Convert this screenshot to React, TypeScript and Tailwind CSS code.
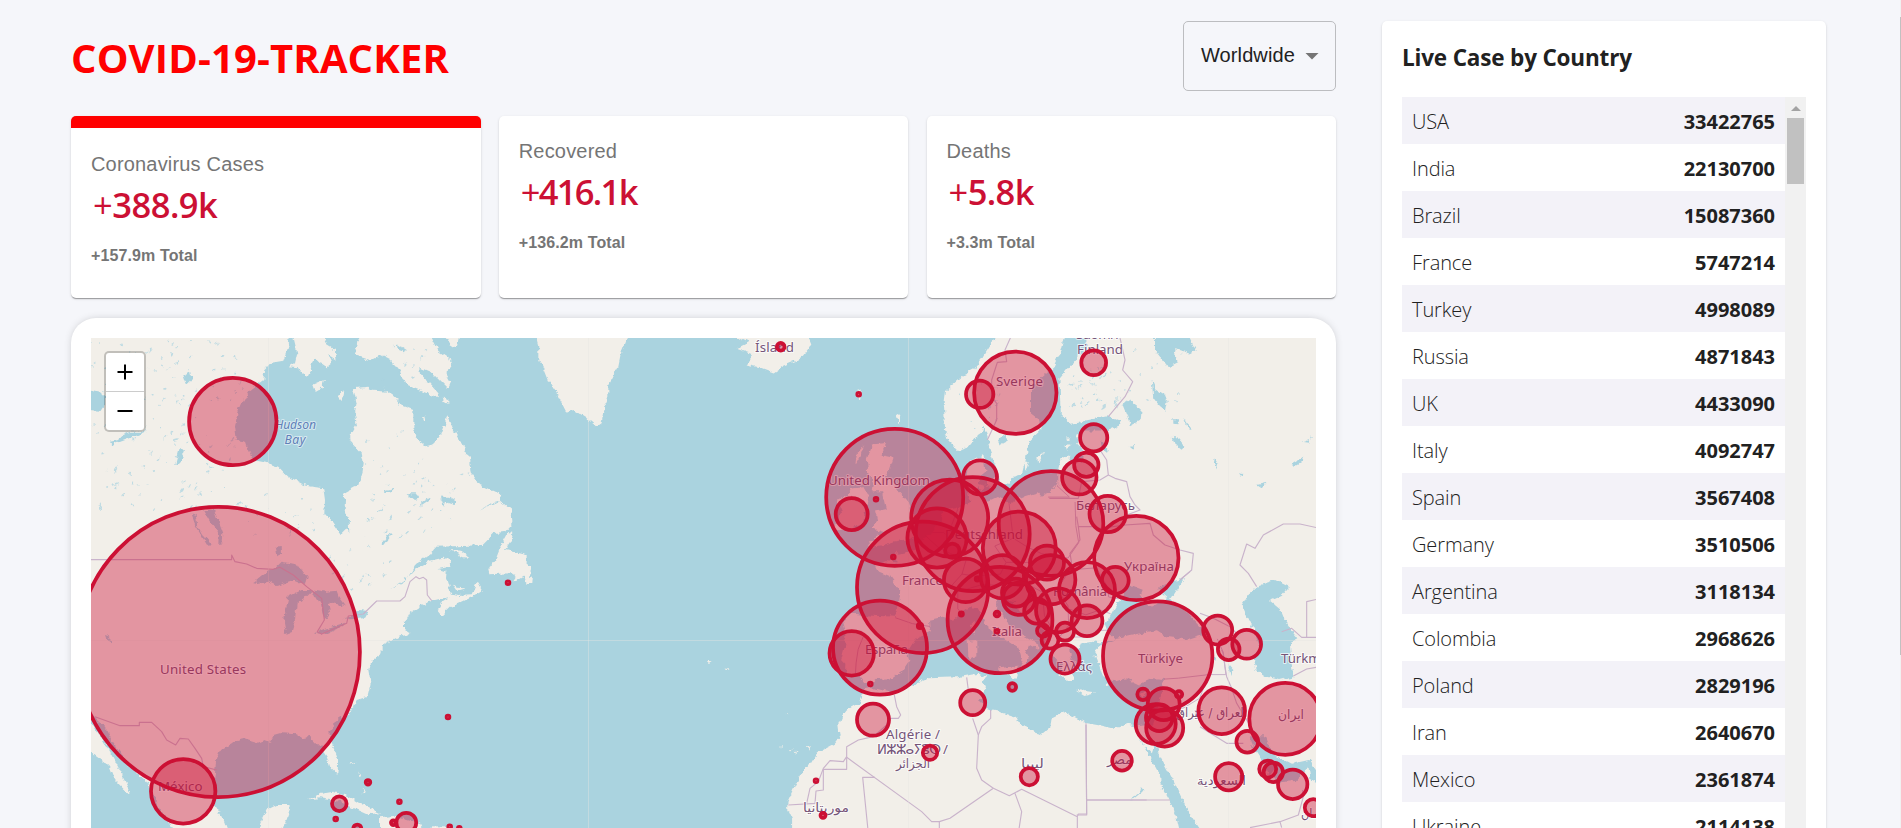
import React from "react";

const MAP = { x: 91, y: 338, w: 1225, h: 490 };
const ORIGIN_X = 908;
const EQUATOR_Y = 960;
const WORLD = 2560;

// Web Mercator projection, one world is 2560px wide at this zoom level.
const project = (lon: number, lat: number) => {
  const phi = (lat * Math.PI) / 180;
  const x = ORIGIN_X + (lon * WORLD) / 360;
  const y = EQUATOR_Y - (WORLD / (2 * Math.PI)) * Math.log(Math.tan(Math.PI / 4 + phi / 2));
  return `${x.toFixed(1)} ${y.toFixed(1)}`;
};

const geo = (s: string, close = true) =>
  "M" +
  s
    .trim()
    .split(/\s+/)
    .map((p) => {
      const [lon, lat] = p.split(",").map(Number);
      return project(lon, lat);
    })
    .join("L") +
  (close ? "Z" : "");

const EURASIA_AFRICA =
  "13,67 12.2,65.5 11,64.7 10.5,64.3 9.3,63.6 8,63.3 7,62.9 5.2,62.2 5,61.5 5.1,60.8 5.2,59.5 5.7,58.7 7,58 8.2,58.2 9.5,59 10.4,59.3 10.6,59.8 11.2,59 11.5,58 12.5,56.6 13,55.5 14.2,55.4 14.5,56 16,56.2 16.6,57.5 17,58.7 18.8,59.6 18.6,60.2 17.3,60.7 17.3,62.2 18.5,63 20.5,63.8 21.5,64.8 22,65.7 25,65.6 25.2,65 23,63.9 21.3,63 21.4,61.5 21.5,60.6 23,59.9 25,60.2 28,60.5 30,60.1 30,59.9 28,59.5 25,59.5 23.5,59.2 23.7,58.6 24.5,58.2 24.3,57.2 23.3,57.1 22.5,57.7 21.4,57.3 21,56.4 21,55.4 20,54.8 18.7,54.5 18.3,54.8 16.5,54.5 14.2,53.9 12.5,54.4 11,54 10,54.8 10,56 10.9,56.4 10.6,57.7 8.5,57.1 8.1,55.6 8.8,54 7,53.5 5,53.3 4.5,52.3 3.6,51.5 2.5,51.1 1.6,50.3 0.2,49.6 -1.2,49.4 -1.8,49.7 -1.6,48.7 -3,48.8 -4.7,48.4 -4.3,47.9 -2.5,47.4 -1.1,46 -1.3,44.5 -1.7,43.4 -5,43.5 -8,43.7 -9.2,43.1 -8.8,42 -8.8,40.5 -9.4,38.8 -8.8,38.3 -8.9,37 -7,37.2 -6,36.2 -5.3,36.1 -4.4,36.7 -2.2,36.8 -0.8,37.6 0.2,38.8 -0.3,39.5 1,41 3.2,41.9 3.1,43.1 5,43.4 6.5,43.1 7.5,43.8 8.8,44.4 10.2,43.9 11,42.4 12.5,41.5 14.3,40.7 15.7,40 16.1,38.7 15.7,38 16.6,38.4 17.1,39.1 16.6,39.8 17,40.5 18.4,39.9 18,40.7 16,41.5 16,41.9 14.2,42.4 13.5,43.6 12.4,44.3 12.4,45.4 13.7,45.6 14.2,45 15,44.9 15.3,44.2 17.3,43 19.3,41.9 19.4,40.5 20.8,39 21.7,38.3 21.3,37.2 22.5,36.5 23.2,36.5 23.1,37.4 24,37.8 22.9,39.2 22.8,40.4 24,40 24.3,40.6 26,40.8 27,40.6 28.9,41 29,41.2 28,42 27.7,42.6 28.5,43.6 29.6,45 31,46.6 33,46.1 32.6,45.4 33.8,44.4 35.4,45 36.5,45.3 35,46.2 37.5,47 39,47.2 38,46.3 37,45.2 39,44 41.5,42 41.5,41.5 39.5,41 36.5,41.3 35,42 32,41.6 29.2,41.2 29,40.9 27,40.4 26.2,39.8 26.8,38.5 27.4,37 29,36.4 30.6,36.8 32.5,36.1 34.5,36.8 36,36.7 35.8,35.5 35,33 34.3,31.4 32.3,31.2 31,31.5 29,30.9 27,31.3 25,31.6 23.2,32.4 21.6,32.9 20.2,32.3 20,31 19,30.3 18,30.5 15.6,31.5 15.2,32.3 13,32.9 11.2,33.2 10,34.2 11,35.5 10.5,36.4 11,37 9.8,37.3 7,36.9 3,36.8 0,35.8 -2,35.1 -3,35.3 -5.3,35.8 -6,35.7 -6.8,34 -8.5,33.2 -9.3,32.3 -9.8,31.3 -9.6,30 -10.5,29 -12.8,27.9 -13.7,26.6 -14.5,26.1 -15.8,24 -16.9,21.8 -17,20.9 -16.3,19.5 -16.3,14 60,10 75,10 75,70";

const ISLANDS = [
  "-5.7,50.1 -3.5,50.3 -2,50.6 0,50.8 1.4,51.2 0.6,51.5 1.7,52.6 0.4,52.9 0.2,53.5 -0.2,54.2 -1.5,55 -2,55.8 -3.3,56 -2.6,56.5 -2,57.5 -3.9,57.7 -3.1,58.6 -5,58.5 -5.8,57.4 -5.6,56.3 -4.8,55.5 -5,54.8 -3.5,54.8 -3,53.5 -4.5,53.3 -4.2,52.5 -5.2,51.8 -3,51.4 -4.2,51.2",
  "-10,51.6 -8.2,51.8 -6.3,52.2 -6,53.5 -5.5,54.5 -6.2,55.2 -8,55.1 -8.5,54.4 -10,54.2 -9.3,53.2 -9.6,52.5 -10.3,52.2",
  "-24.5,65.6 -22.5,65.2 -24,64.9 -22,64.6 -21.8,64.3 -22.7,63.9 -20.8,63.7 -18.9,63.4 -17.5,63.8 -15.8,64.1 -14.6,64.5 -13.6,65.1 -14.3,65.8 -15,66.5 -24,66.5",
  "-7.2,57.8 -6.2,58.4 -6.6,57.8 -7.4,57",
  "-1.6,60.5 -0.9,60.7 -1.2,59.9",
  "-7.2,62.2 -6.5,62.3 -6.8,61.5",
  "12.5,37.9 15.6,38.2 15.1,36.7",
  "8.4,40.9 9.6,41 9.6,39.2 8.5,39",
  "8.7,42.5 9.4,43 9.4,41.5",
  "23.6,35.5 26.2,35.2 24.8,34.9",
  "32.4,35 34.5,35.6 33,34.6",
  "11,55.6 12.5,56 12.2,55 11.2,55.2",
  "9.8,55.5 10.8,55.3 10.2,55",
  "18.2,57.6 19,57.9 18.3,57",
  "22,58.4 23,58.4 22.2,58.1",
  "22.2,59 23,59 22.6,58.8",
  "2.4,39.6 3.3,39.8 3,39.3",
  "16.4,57.2 17,57.3 16.5,56.4",
  "28,36.4 28.2,36.1 27.8,36",
  "26,39.3 26.5,39.2 26.2,39",
  "23.3,38.9 24.4,38.1 23.7,38.4",
  "-16.8,28.4 -16.2,28.5 -16.6,28.1",
  "-15.8,28.1 -15.4,28 -15.6,27.8",
  "-14.2,28.6 -13.8,28.8 -14,28.2",
  "-17.9,28.8 -17.7,28.7 -17.9,28.5",
  "-17.2,32.8 -16.8,32.8 -17,32.7",
  "-28.3,38.7 -27.6,38.7 -28,38.5",
  "-25.8,37.9 -25.2,37.8 -25.6,37.7",
];

const SEAS = [
  "32.5,30 33.7,28 35.5,25 35.5,24 37.3,21 38,18 37.5,15 44,12 43,15 41.5,17.5 39,21 37.3,24.5 35.2,28 34.9,29.5 34.3,27.9 33,29",
  "48,30 50.2,30 51.3,27.8 54,26.6 56.5,27.1 57.5,25.8 62,25.2 62,22 59.8,22.4 58.5,23.7 56.6,24.6 56.3,26.2 54.5,24.4 51.7,24.2 51.5,25.9 50.8,25 50,26.7 48.3,29",
  "27.2,58.9 27.8,58.6 28.1,57.9 27.4,58.2",
  "12.5,58.8 13.8,59.3 13.9,58.7 12.9,58.4",
];

const EUROPE_BORDERS = [
  "-8.8,41.9 -6.5,41.9 -6.2,41.5 -7,40 -7.3,38.5 -7.4,37.2",
  "-1.8,43.3 0.6,42.7 3.1,42.4",
  "2.5,51.1 4.2,50.1 6,49.5 8.2,49 7.6,47.6 6,46.4 7,45.9 7,44.2 7.5,43.8",
  "3.4,51.4 5,51.4 6,50.8 6.1,52 7,53.4",
  "7.6,47.6 9.6,47.4 13,47.6 13.8,48.7 12.2,50.2 14.8,50.9 14.2,53.9",
  "7,45.9 10.4,46.6 13.7,46.5 13.7,45.6",
  "14.8,50.9 16.8,50.1 18.8,49.5 22.5,49.1 24,50.5 23.6,52 23.5,54",
  "13.8,48.7 17,48.7 17.2,48 16.1,46.9 18.8,45.9 21,46.2 22.8,48",
  "22.8,48 26.5,48.2 28.2,46.2 28.2,45.4 29.6,45.2",
  "22.6,44.2 25,43.6 27,44.1 28.5,43.7",
  "21,46.2 22.5,44.5 22.6,42.5 21,41 20,42.5 19.2,43.5 19,44.9",
  "22.9,41.3 26,41.3 26.5,42 28,42",
  "-8,54.5 -7.3,54.1 -6.2,54.1",
  "21,55.3 22.7,54.4 19.7,54.4",
  "36,36.7 38,36.8 42.3,37.2 44.7,37.2 44.3,39.7 43.5,41.1",
  "35.8,33 38.8,33.4 41,34.5 42.3,37.2",
];

// Outlines drawn in third-of-a-pixel units, grouped by the map sheet they belong to.
const WEST_LAND = [
  "M20 10L632 10L625 50L610 92L575 98L552 125L550 150L530 165L505 185L485 220L472 250L465 290L470 330L497 335L505 360L520 390L560 398L595 410L625 440L670 465L705 472L730 475L735 510L733 550L760 580L782 612L797 597L808 607L806 575L797 540L798 510L790 490L825 470L845 440L851 400L845 370L815 340L808 325L830 285L825 250L830 220L820 175L865 170L880 182L925 185L960 215L935 200L910 172L940 200L960 225L1000 240L1000 290L1010 325L1045 352L1080 325L1095 285L1105 262L1125 305L1150 350L1170 385L1175 430L1200 465L1265 495L1260 512L1295 540L1297 580L1275 605L1240 610L1205 645L1150 648L1065 650L1050 672L1005 705L985 740L930 778L975 752L1005 718L1050 692L1090 683L1113 695L1110 710L1075 717L1100 725L1098 745L1112 790L1135 795L1175 793L1192 755L1208 782L1175 802L1115 830L1087 857L1073 840L1085 815L1110 800L1055 812L1020 830L990 850L975 880L975 900L992 912L950 922L905 945L905 970L885 985L870 1000L865 1020L872 1060L862 1100L830 1110L820 1140L790 1160L760 1180L748 1210L757 1245L775 1290L772 1335L752 1315L740 1280L720 1250L690 1220L670 1225L650 1213L610 1210L580 1218L570 1235L555 1230L530 1240L490 1228L455 1240L420 1260L408 1290L405 1330L400 1380L405 1430L430 1470L445 1510L530 1510L545 1470L560 1440L590 1425L632 1425L625 1455L605 1510L290 1510L240 1440L225 1400L195 1350L150 1310L100 1240L75 1190L33 1150L10 1100Z",
  "M10 1165L45 1190L75 1240L100 1285L120 1325L150 1382L143 1390L105 1350L90 1310L40 1275L10 1240Z",
  "M640 20L652 70L645 100L625 112L655 115L680 140L692 115L700 85L740 112L755 100L745 75L770 90L765 60L740 45L728 20Z",
  "M697 165L735 150L728 172L705 185Z",
  "M780 178L793 185L788 210L775 195Z",
  "M850 10L825 50L832 78L870 90L900 75L930 90L955 115L980 165L1010 178L1080 205L1075 190L1020 130L1018 112L1060 130L1105 175L1112 160L1095 130L1117 110L1105 80L1075 60L1050 10Z",
  "M1095 20L1138 20L1130 52L1105 35Z",
  "M1088 200L1105 208L1105 222L1092 215Z",
  "M1026 262L1038 260L1030 272Z",
  "M683 1408L720 1392L760 1385L810 1400L850 1425L902 1450L860 1453L810 1430L780 1415L720 1405Z",
  "M900 1462L940 1458L1010 1478L1027 1488L1010 1510L900 1510Z",
  "M1055 1492L1110 1492L1110 1510L1055 1510Z",
  "M805 1300L830 1300L815 1305ZM835 1320L842 1345L838 1345ZM845 1375L855 1390L848 1390Z",
  "M1365 10L1375 50L1375 90L1390 110L1410 160L1430 190L1460 248L1480 240L1520 265L1550 290L1565 280L1570 240L1585 200L1585 165L1615 110L1622 75L1640 30L1648 10Z",
  "M1300 605L1285 603L1265 640L1245 690L1222 720L1225 733L1295 730L1310 740L1300 755L1332 735L1340 762L1360 762L1362 735L1350 740L1355 705L1340 705L1340 675L1300 665L1275 660L1295 630Z",
  "M1110 660L1140 662L1168 683L1150 682Z",
  "M1115 760L1130 773L1158 775L1130 783Z",
];

const WEST_LAKES = [
  "M20 175L60 185L75 200L75 220L60 242L20 240Z",
  "M520 760L550 735L590 710L605 695L630 700L655 705L680 740L675 765L640 750L610 760L590 768L565 755L535 762Z",
  "M625 800L665 780L700 780L680 800L650 820L645 870L635 905L618 912L612 880L617 840Z",
  "M695 778L740 785L770 782L778 805L797 828L770 822L745 815L750 850L735 870L725 850L720 825L705 800Z",
  "M705 910L740 895L800 877L775 895L725 917Z",
  "M790 865L825 855L835 840L862 843L850 865L815 868Z",
  "M370 540L405 540L415 570L430 610L428 640L415 642L417 610L390 575L378 555Z",
  "M332 550L350 555L355 590L365 610L395 645L383 648L360 610L345 585Z",
  "M587 650L605 648L606 670L592 676Z",
  "M120 318L150 305L200 305L150 325L95 345L90 335L115 330Z",
  "M310 135L330 125L335 150L320 165Z",
  "M300 350L315 365L300 400L285 405Z",
  "M75 915L90 920L95 940L80 930Z",
  "M905 640L925 612L932 615L910 645Z",
  "M1080 500L1110 500L1125 510L1125 525L1095 515L1090 530Z",
  "M980 490L1010 490L1020 505L1005 510Z",
  "M1020 520L1050 500L1052 505L1022 525Z",
  "M915 480L942 474L942 479L916 487Z",
  "M950 40L980 60L975 70L955 62Z",
  "M1200 540L1240 515L1262 510L1230 525Z",
];

const WEST_BORDERS = [
  "M20 689L455 689L455 675L465 695L500 702L530 715L580 718L600 712L640 735L680 770L725 805L733 870L712 905L725 912L800 880L805 858L850 852L890 813L960 813L975 800L990 755L1008 740L1018 746L1030 742L1040 750L1042 795L1055 812",
  "M45 1160L120 1187L178 1187L178 1177L215 1177L245 1205L260 1230L287 1245L300 1225L325 1227L345 1255L365 1285L370 1310L410 1320",
];

const NORTH_LAKES = [
  "M765 15L765 60L800 105L812 108L837 95L820 65L830 58L872 72L887 60L865 15Z",
  "M668 225L690 208L700 222L725 240L722 270L690 287L680 255Z",
  "M755 150L765 175L795 195L803 215L798 242L780 228L760 205Z",
  "M818 320L835 325L857 352L848 362L828 345Z",
  "M850 260L860 275L875 300L862 290Z",
  "M820 268L835 268L832 280L820 278Z",
  "M686 350L703 348L695 358Z",
  "M945 385L952 400L947 418L942 400Z",
  "M1017 430L1030 432L1025 440ZM1070 465L1100 458L1085 475Z",
  "M1175 402L1210 380L1205 395L1180 410ZM1205 335L1235 325L1232 312L1228 338Z",
];

const NORTH_BORDERS = [
  "M335 15L315 60L320 95L292 97L275 150L275 200L290 220L290 270L262 330",
  "M658 15L675 90L668 120L698 155L675 200L625 260",
];

const MIDDLE_BORDERS = [
  "M300 90L320 120L325 165L300 180L245 185L235 235L148 235",
  "M325 165L345 175L380 185L390 230L405 255L420 270L380 285",
  "M230 290L235 320L280 320L300 325L375 315L450 310L460 345L495 375L540 390L580 400L575 450L545 475",
  "M235 320L240 360L210 400L215 430",
  "M960 325L900 312L850 312L790 345L765 385L740 372L720 435L745 460L770 500",
];

const AFRICA_BORDERS = [
  "M343 165L350 200L362 225L355 235L325 235L320 255L280 290L235 300L200 320L200 388L130 388L130 450L108 453L105 490L25 495",
  "M200 350L190 365L150 362L130 385L115 425L90 445L80 490",
  "M200 352L425 515L455 545L478 545L510 535L640 445L605 420L590 385L595 285L578 235",
  "M595 285L605 260L632 235L632 210M560 112L565 150",
  "M285 412L248 412L265 580M478 545L478 580",
  "M640 445L688 467L725 448L892 530L895 522L920 522L918 250M920 480L1100 480M892 530L892 580M705 460L725 515L715 580",
];

const EAST_WATER = [
  "M540 45L585 30L627 50L605 75L570 90L600 115L612 145L635 180L655 205L630 218L632 260L640 320L600 330L560 320L530 300L520 260L545 240L525 190L500 140L485 105L505 75Z",
  "M447 285L460 300L455 318ZM395 255L412 270L400 275Z",
  "M184 648L190 665L160 690L150 692L180 670Z",
];

const EAST_BORDERS = [
  "M18 465L20 735L-10 735M20 690L270 690",
  "M360 470L440 520L490 520M425 240L430 250L435 290L440 320L455 355L470 400L530 500",
  "M510 773L600 755L655 735L670 680L668 660M600 755L605 773",
  "M605 185L635 175L665 202L710 202M680 200L680 95L710 88M640 318L680 297L710 292",
  "M300 30L330 5",
  "M360 130L400 145L450 170L470 190",
];

type Circle = [number, number, number, number?];

// centre x, centre y, horizontal radius, vertical radius when it differs
const CIRCLES: Circle[] = [
  [232.8, 421.5, 43.7], [218.3, 652, 141.6, 145.1], [183.2, 791.3, 32.2], [339.3, 803.7, 7.3], [368, 782.3, 2.3],
  [335.7, 819, 1.4], [357.3, 828.5, 4], [393.3, 822.7, 2.3], [399.4, 801.7, 1.4], [406.3, 822.7, 9.9],
  [449.7, 826.7, 1.4], [459.3, 828.3, 1.4], [508, 582.7, 1.4], [448, 717, 1.4],
  [780.7, 346.7, 3.8], [858.7, 394.3, 1.4], [894.7, 497.3, 68.5], [851.7, 514, 16], [876, 499.3, 1.4],
  [893.3, 557, 1.4], [922.7, 587.3, 65.7], [880, 647.7, 47], [851.7, 653.3, 22.2], [870.3, 684, 1.4],
  [873, 719.7, 16], [816, 780.7, 1.4], [823, 815.3, 2.5], [920, 626, 2.2], [949.7, 518, 38.5],
  [972.7, 534, 57], [937, 538, 29.6], [952.3, 550.7, 7.2], [965.7, 580.3, 21.8], [977.3, 579, 1.6],
  [961.3, 614, 1.6], [1000, 620, 52.4, 53.2], [997, 614, 2.4], [997, 631.3, 1.4], [1019.3, 548, 36.5],
  [1002.3, 576.7, 21.7], [1051, 523.5, 52.3], [1050.7, 579.7, 24.7], [1047, 562.7, 17], [1016, 592.7, 14],
  [1019, 598.7, 16.2], [1036.7, 611, 12.5], [1058, 610.3, 22], [1087, 590, 28], [1043, 630.7, 6],
  [1050, 640, 8.5], [1065, 631.7, 9], [1087, 620.7, 15.4], [1065, 659, 14.5], [1136.3, 558, 42.2],
  [1115.3, 580.3, 13.4], [1107.7, 514, 18.2], [1079.3, 477.3, 17.2], [1086.3, 464.7, 12.2], [1093.7, 437.7, 13.6],
  [1093.7, 362.7, 12.4], [1015.3, 392.7, 41.2], [979.7, 394.3, 13.7], [980, 477.3, 17], [1157.7, 656, 54.7],
  [1143, 694.3, 5.7], [1179, 694.3, 3.2], [1163.7, 704, 16], [1155.7, 724, 20], [1159.3, 717.7, 13.3],
  [1164.7, 728, 18.5], [1217.7, 630, 14.5], [1228.7, 649.3, 10.8], [1246.7, 644.3, 14.4], [1221.7, 710.7, 23.3],
  [1285.3, 718.8, 36], [1247.3, 741.7, 10.9], [1122, 760.7, 9.8], [1228.7, 776.7, 13.6], [1267.7, 769, 8.5],
  [1273.3, 772.3, 9.7], [1292.7, 784.3, 14.7], [1313.3, 807.7, 8.5], [930, 752.7, 7.2], [972.7, 702.7, 12.5],
  [1012.3, 687, 3.8], [1029.3, 776.7, 8.6],
];

// text, left, right, baseline
type Label = [string, number, number, number];

const LABELS: Label[] = [
  ["United States", 160, 246, 674],
  ["México", 158, 202.5, 790.5],
  ["Ísland", 755, 794, 352.3],
  ["United Kingdom", 828, 930, 485.4],
  ["Deutschland", 945, 1023, 538.5],
  ["France", 902, 943, 585.3],
  ["España", 865, 908, 653.5],
  ["Italia", 992, 1022, 635.5],
  ["Беларусь", 1076, 1135, 510],
  ["Україна", 1124, 1174, 571],
  ["România", 1053, 1107, 596],
  ["Ελλάς", 1056, 1092, 670.5],
  ["Türkiye", 1138, 1183, 662.7],
  ["Türkmenistan", 1281, 1366, 663],
  ["Suomi /", 1076, 1121, 339],
  ["Finland", 1077, 1123, 353.5],
  ["Sverige", 996, 1043, 385.6],
  ["Algérie /", 886, 940, 739],
  ["ⵍⵣⵣⴰⵢⴻⵔ /", 877, 948, 754],
];

const ARABIC: Label[] = [
  ["الجزائر", 896, 930, 768],
  ["ليبيا", 1021, 1044, 768],
  ["موريتانيا", 803, 849, 812],
  ["مصر", 1107, 1132, 764],
  ["السعودية", 1197, 1246, 785],
  ["العراق / عێراق", 1176, 1247, 717],
  ["ايران", 1278, 1304, 719],
  ["عمان", 1301, 1326, 818],
];

// Deterministic scatter of the small ponds covering the Canadian Shield and Karelia.
type Pond = { x: number; y: number; rx: number; ry: number; a: number };
const scatter = (seed: number, n: number, x: number, y: number, w: number, h: number): Pond[] => {
  let s = seed;
  const rnd = () => {
    s = (s * 16807) % 2147483647;
    return s / 2147483647;
  };
  return Array.from({ length: n }, () => ({
    x: x + rnd() * w,
    y: y + rnd() * h,
    rx: 0.6 + rnd() * rnd() * 3,
    ry: 0.4 + rnd() * 0.7,
    a: -70 + rnd() * 60,
  }));
};

const PONDS: Pond[] = [
  ...scatter(11, 60, 92, 340, 150, 60),
  ...scatter(23, 60, 92, 395, 145, 95),
  ...scatter(37, 22, 100, 480, 130, 30),
  ...scatter(41, 18, 240, 480, 80, 60),
  ...scatter(53, 36, 365, 420, 70, 120),
  ...scatter(67, 18, 420, 470, 50, 60),
  ...scatter(71, 16, 330, 540, 60, 50),
  ...scatter(83, 45, 1070, 365, 55, 45),
  ...scatter(97, 12, 1130, 345, 60, 60),
  ...scatter(101, 14, 960, 380, 40, 50),
  ...scatter(113, 12, 382, 345, 50, 40),
];

const cases: [string, string][] = [
  ["USA", "33422765"], ["India", "22130700"], ["Brazil", "15087360"], ["France", "5747214"],
  ["Turkey", "4998089"], ["Russia", "4871843"], ["UK", "4433090"], ["Italy", "4092747"],
  ["Spain", "3567408"], ["Germany", "3510506"], ["Argentina", "3118134"], ["Colombia", "2968626"],
  ["Poland", "2829196"], ["Iran", "2640670"], ["Mexico", "2361874"], ["Ukraine", "2114138"],
];

const paths = (list: string[]) => list.map((d) => <path key={d} d={d} />);

function WorldMap() {
  return (
    <svg
      className="block h-[490px] w-[1225px]"
      viewBox={`${MAP.x} ${MAP.y} ${MAP.w} ${MAP.h}`}
      role="img"
      aria-label="World map"
    >
      <defs>
        <filter id="coast" x="0" y="0" width="100%" height="100%">
          <feTurbulence type="fractalNoise" baseFrequency="0.16" numOctaves="3" seed="4" result="n" />
          <feDisplacementMap in="SourceGraphic" in2="n" scale="6" xChannelSelector="R" yChannelSelector="G" />
        </filter>
      </defs>
      <rect x={MAP.x} y={MAP.y} width={MAP.w} height={MAP.h} fill="#aad3df" />
      <g filter="url(#coast)">
        <rect x={MAP.x - 20} y={MAP.y - 20} width={MAP.w + 40} height={MAP.h + 40} fill="#aad3df" />
        <g fill="#f2efe9">
          <path d={geo(EURASIA_AFRICA)} />
          {ISLANDS.map((s) => (
            <path key={s} d={geo(s)} />
          ))}
          <g transform="translate(80 330) scale(.33333)">{paths(WEST_LAND)}</g>
        </g>
        <g fill="#aad3df">
          {SEAS.map((s) => (
            <path key={s} d={geo(s)} />
          ))}
          <g transform="translate(80 330) scale(.33333)">{paths(WEST_LAKES)}</g>
          <g transform="translate(900 330) scale(.33333)">{paths(NORTH_LAKES)}</g>
          <g transform="translate(1080 570) scale(.33333)">{paths(EAST_WATER)}</g>
          {PONDS.map((p, i) => (
            <ellipse key={i} cx={p.x} cy={p.y} rx={p.rx} ry={p.ry} opacity={0.7} transform={`rotate(${p.a} ${p.x} ${p.y})`} />
          ))}
        </g>
      </g>
      <g fill="none" stroke="#c9b3cb" strokeWidth="1" strokeLinejoin="round">
        {EUROPE_BORDERS.map((s) => (
          <path key={s} d={geo(s, false)} />
        ))}
        <g strokeWidth="3.4">
          <g transform="translate(80 330) scale(.33333)">{paths(WEST_BORDERS)}</g>
          <g transform="translate(900 330) scale(.33333)">{paths(NORTH_BORDERS)}</g>
          <g transform="translate(1000 420) scale(.33333)">{paths(MIDDLE_BORDERS)}</g>
          <g transform="translate(780 640) scale(.33333)">{paths(AFRICA_BORDERS)}</g>
          <g transform="translate(1080 570) scale(.33333)">{paths(EAST_BORDERS)}</g>
        </g>
      </g>
      <path
        d="M268.5 338V828M588.5 338V828M908.5 338V828M1228.5 338V828M91 640.5H1316"
        fill="none"
        stroke="#e6e6e0"
        strokeOpacity=".4"
      />
      <g
        fill="#755478"
        stroke="#fff"
        strokeOpacity=".7"
        strokeWidth="2"
        strokeLinejoin="round"
        paintOrder="stroke"
        fontSize="13.3"
        fontFamily="'Noto Sans','DejaVu Sans',sans-serif"
      >
        {LABELS.map(([t, l, r, y]) => (
          <text key={t} x={l} y={y} textLength={r - l}>
            {t}
          </text>
        ))}
        <g fontFamily="'DejaVu Sans',sans-serif" fontSize="12.5">
          {ARABIC.map(([t, l, r, y]) => (
            <text key={t} x={(l + r) / 2} y={y} textAnchor="middle" textLength={r - l} lengthAdjust="spacingAndGlyphs">
              {t}
            </text>
          ))}
        </g>
        <g fill="#6080b8" strokeOpacity=".5" fontStyle="italic" fontSize="12.2">
          <text x="275" y="428.5" textLength="41">Hudson</text>
          <text x="284.5" y="443.5" textLength="21">Bay</text>
        </g>
      </g>
      <g fill="#cc1034" fillOpacity=".4" stroke="#cc1034" strokeWidth="3.75">
        {CIRCLES.map(([x, y, rx, ry], i) => (
          <ellipse key={i} cx={x} cy={y} rx={rx} ry={ry ?? rx} />
        ))}
      </g>
    </svg>
  );
}

function ZoomControl() {
  return (
    <div className="absolute left-[12.5px] top-[12.5px] flex h-[81px] w-[42px] flex-col rounded-[5px] border-2 border-black/20 bg-white bg-clip-padding">
      <button className="flex flex-1 items-center justify-center border-b border-[#ccc] pl-px" aria-label="Zoom in">
        <svg width="16" height="16" viewBox="0 0 16 16">
          <path d="M0.5 8H15.5M8 0.5V15.5" stroke="#000" strokeWidth="2" />
        </svg>
      </button>
      <button className="flex flex-1 items-center justify-center pl-px" aria-label="Zoom out">
        <svg width="16" height="16" viewBox="0 0 16 16">
          <path d="M0.5 8H15.5" stroke="#000" strokeWidth="2" />
        </svg>
      </button>
    </div>
  );
}

const cardShadow =
  "shadow-[0_2px_1px_-1px_rgba(0,0,0,0.2),0_1px_1px_0_rgba(0,0,0,0.14),0_1px_3px_0_rgba(0,0,0,0.12)]";

type InfoBoxProps = { title: string; value: string; total: string; tracking: string; active?: boolean };

function InfoBox({ title, value, total, tracking, active }: InfoBoxProps) {
  return (
    <div
      className={`flex h-[182px] w-[409.5px] flex-col rounded-[5px] bg-white px-5 ${cardShadow} ${
        active ? "border-t-[12px] border-[#ff0000] pt-[21px]" : "pt-[20px]"
      }`}
    >
      <div className="h-[30px] text-[20px] leading-[30px] tracking-[0.18px] text-[#757575]">{title}</div>
      <div
        className={`mt-[3px] h-[46px] pl-[2px] font-['Open_Sans','Noto_Sans',sans-serif] text-[34.5px] font-semibold leading-[45px] text-[#cc1034] ${tracking}`}
      >
        <span className="font-normal">{value[0]}</span>
        {value.slice(1)}
      </div>
      <div className="mt-[16px] text-[16px] font-bold leading-[24px] tracking-[0.12px] text-[#757575]">{total}</div>
    </div>
  );
}

export default function App() {
  return (
    <div className="flex h-[828px] w-[1901px] overflow-hidden bg-[#f5f6fa] font-['Liberation_Sans',Arial,sans-serif]">
      <main className="flex w-[1336px] shrink-0 flex-col pl-[71px] pt-[21px]">
        <header className="flex h-[70px] items-start justify-between">
          <h1 className="pt-[9px] font-['Open_Sans','Noto_Sans',sans-serif] text-[40px] font-bold leading-[55px] tracking-[0.15px] text-[#ff0000]">
            COVID-19-TRACKER
          </h1>
          <div className="flex h-[70px] w-[153px] items-center rounded-[5px] border border-[#bcbdc0] pb-[3px] pl-[17px] text-[20px] tracking-[0.1px] text-[#212121]">
            <span>Worldwide</span>
            <svg className="ml-[10px] mt-[3px]" width="14" height="7" viewBox="0 0 14 7">
              <path d="M0.5 0H13.5L7 6.5Z" fill="#757575" />
            </svg>
          </div>
        </header>

        <section className="mt-[25px] flex justify-between">
          <InfoBox title="Coronavirus Cases" value="+388.9k" total="+157.9m Total" tracking="tracking-[-0.5px]" active />
          <InfoBox title="Recovered" value="+416.1k" total="+136.2m Total" tracking="tracking-[-1.7px]" />
          <InfoBox title="Deaths" value="+5.8k" total="+3.3m Total" tracking="tracking-[-0.6px]" />
        </section>

        <section className="mt-5 h-[560px] shrink-0 rounded-[25px] bg-white p-5 shadow-[0_0_10px_-3px_rgba(0,0,0,0.3)]">
          <div className="relative overflow-hidden">
            <WorldMap />
            <ZoomControl />
          </div>
        </section>
      </main>

      <aside className={`ml-[46px] mt-[21px] h-[860px] w-[444px] shrink-0 rounded-[5px] bg-white p-5 ${cardShadow}`}>
        <h3 className="pt-px font-['Open_Sans','Noto_Sans',sans-serif] text-[22.5px] font-bold leading-[32px] tracking-[-0.17px] text-[#212121]">
          Live Case by Country
        </h3>
        <div className="mt-[23px] flex h-[800px] overflow-hidden">
          <div className="flex flex-1 flex-col font-['Open_Sans','Noto_Sans',sans-serif] text-[20px] text-[#212121]">
            {cases.map(([country, count], i) => (
              <div
                key={country}
                className={`flex h-[47px] shrink-0 items-center justify-between px-[10px] pt-[3px] ${
                  i % 2 === 0 ? "bg-[#f3f2f8]" : "bg-white"
                }`}
              >
                <span className="font-light tracking-[-0.1px]">{country}</span>
                <strong className="font-bold tracking-[-0.02px]">{count}</strong>
              </div>
            ))}
          </div>
          <div className="flex w-[21px] flex-col items-center bg-[#f1f1f1]">
            <svg className="mt-[9px]" width="10" height="5" viewBox="0 0 10 5">
              <path d="M5 0L10 5H0Z" fill="#a3a3a3" />
            </svg>
            <div className="mt-[7px] h-[66px] w-[17px] bg-[#c1c1c1]" />
          </div>
        </div>
      </aside>

      <div className="ml-auto flex w-px flex-col bg-[#f1f1f1]">
        <div className="mt-[17px] h-[638px] w-px bg-[#c1c1c1]" />
      </div>
    </div>
  );
}
